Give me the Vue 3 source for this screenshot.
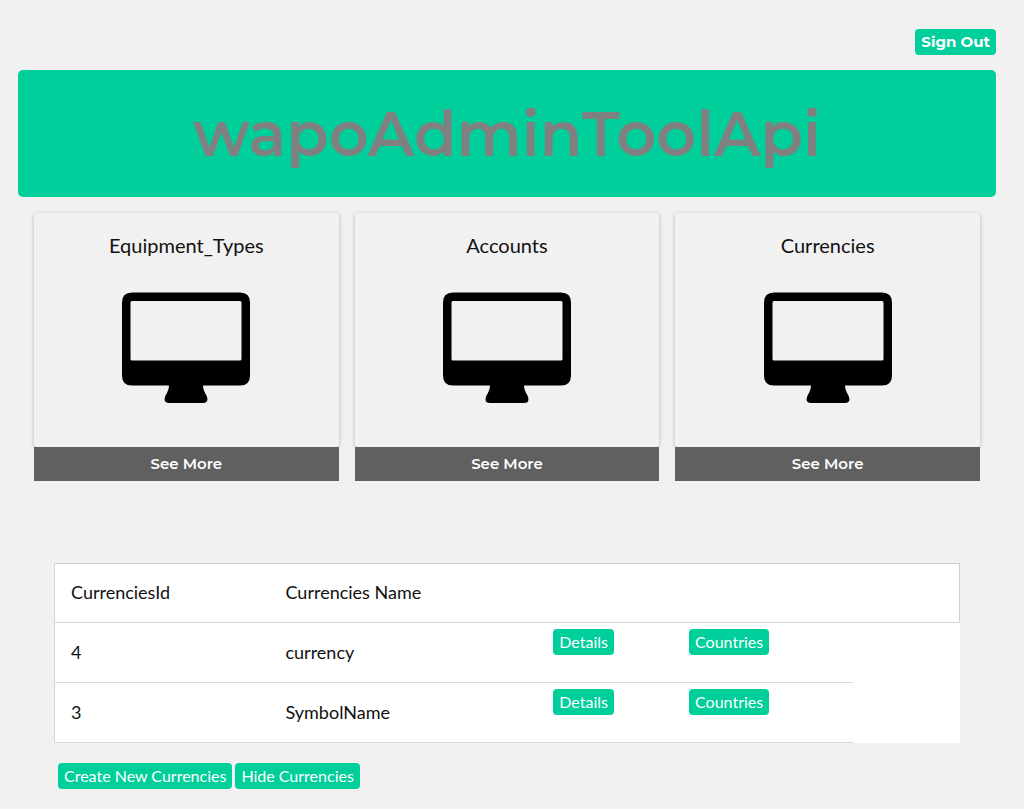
<script setup>
import { ref } from 'vue'

const cards = ['Equipment_Types', 'Accounts', 'Currencies']
const rows = ref([
  { id: 4, name: 'currency' },
  { id: 3, name: 'SymbolName' },
])
</script>

<template>
  <main class="page">
    <div class="topbar">
      <button type="button" class="btn brand-font">Sign Out</button>
    </div>

    <header class="banner">
      <h1>wapoAdminToolApi</h1>
    </header>

    <section class="cards">
      <article v-for="card in cards" :key="card" class="card-column">
        <div class="card">
          <h2>{{ card }}</h2>
          <svg class="monitor" viewBox="0 0 128 112" aria-hidden="true">
            <path
              fill-rule="evenodd"
              d="M10 0.500H118Q128 0.500 128 10.500V83.500Q128 93.500 118 93.500H81Q81 98 84.500 103.500Q87.500 111 81 111H47Q40.500 111 43.500 103.500Q47 98 47 93.500H10Q0 93.500 0 83.500V10.500Q0 0.500 10 0.500ZM10 9Q8.500 9 8.500 10.500V67Q8.500 68.500 10 68.500H118Q119.500 68.500 119.500 67V10.500Q119.500 9 118 9Z"
            />
          </svg>
        </div>
        <button type="button" class="see-more brand-font">See More</button>
      </article>
    </section>

    <section class="listing">
      <table>
        <colgroup>
          <col class="col-id" />
          <col class="col-name" />
          <col class="col-details" />
          <col class="col-countries" />
          <col />
        </colgroup>
        <thead>
          <tr>
            <th scope="col">CurrenciesId</th>
            <th scope="col">Currencies Name</th>
            <th></th>
            <th></th>
            <th></th>
          </tr>
        </thead>
        <tbody>
          <tr v-for="row in rows" :key="row.id">
            <td>{{ row.id }}</td>
            <td>{{ row.name }}</td>
            <td class="action"><button type="button" class="btn">Details</button></td>
            <td class="action"><button type="button" class="btn">Countries</button></td>
          </tr>
        </tbody>
      </table>
      <div class="actions">
        <button type="button" class="btn">Create New Currencies</button>
        <button type="button" class="btn">Hide Currencies</button>
      </div>
    </section>
  </main>
</template>

<style>
body {
  background: #f1f1f1;
}
</style>

<style scoped>
.page {
  padding: 29px 28px 20px 18px;
  font-family: Lato, "Open Sans", sans-serif;
  font-size: 18px;
  color: #111;
}

button {
  border: 0;
  margin: 0;
  color: #fff;
  cursor: pointer;
}

.btn {
  display: block;
  height: 26px;
  padding: 0 6px;
  border-radius: 4px;
  background: #00ce9b;
  font-family: Lato, sans-serif;
  font-size: 16px;
  line-height: 26px;
  white-space: nowrap;
}

.brand-font {
  font-family: Montserrat, Inter, sans-serif;
  font-size: 15px;
  font-weight: 600;
}

.topbar {
  display: flex;
  justify-content: flex-end;
  margin-bottom: 15px;
}

.topbar .btn {
  font-weight: 700;
}

.banner {
  display: flex;
  align-items: center;
  justify-content: center;
  height: 127px;
  border-radius: 5px;
  background: #00ce9b;
}

h1 {
  margin: 0;
  color: #808080;
  font-family: Montserrat, Inter, sans-serif;
  font-size: 62px;
  font-weight: 600;
  line-height: 80px;
}

.cards {
  display: grid;
  grid-template-columns: repeat(3, 1fr);
  gap: 16px;
  padding: 16px;
}

.card {
  display: flex;
  flex-direction: column;
  align-items: center;
  height: 234px;
  border-radius: 3px;
  box-shadow: 0 1px 4px rgba(0, 0, 0, 0.25);
}

h2 {
  margin: 18px 0 33px;
  font-size: 20px;
  font-weight: 400;
  line-height: 28px;
}

.monitor {
  width: 128px;
  height: 112px;
}

.see-more {
  position: relative;
  display: block;
  width: 100%;
  height: 34px;
  padding: 0 0 2px;
  background: #606060;
}

.listing {
  padding: 66px 36px 0;
}

table {
  width: 100%;
  table-layout: fixed;
  border-collapse: separate;
  border-spacing: 0;
  border-left: 1px solid #d6d6d6;
  background: #fff;
}

.col-id {
  width: 23.7%;
}

.col-name {
  width: 30.7%;
}

.col-details {
  width: 15%;
}

.col-countries {
  width: 18.8%;
}

th,
td {
  box-sizing: border-box;
  height: 60px;
  padding: 0 16px 2px;
  border-bottom: 1px solid #d8d8d8;
  font-weight: 400;
  text-align: left;
}

th {
  border-top: 1px solid #d0d0d0;
}

th:last-child {
  border-right: 1px solid #d0d0d0;
}

td.action {
  padding: 6px 6px 0;
  vertical-align: top;
}

.actions {
  display: flex;
  gap: 3px;
  padding: 20px 4px 0;
}
</style>
